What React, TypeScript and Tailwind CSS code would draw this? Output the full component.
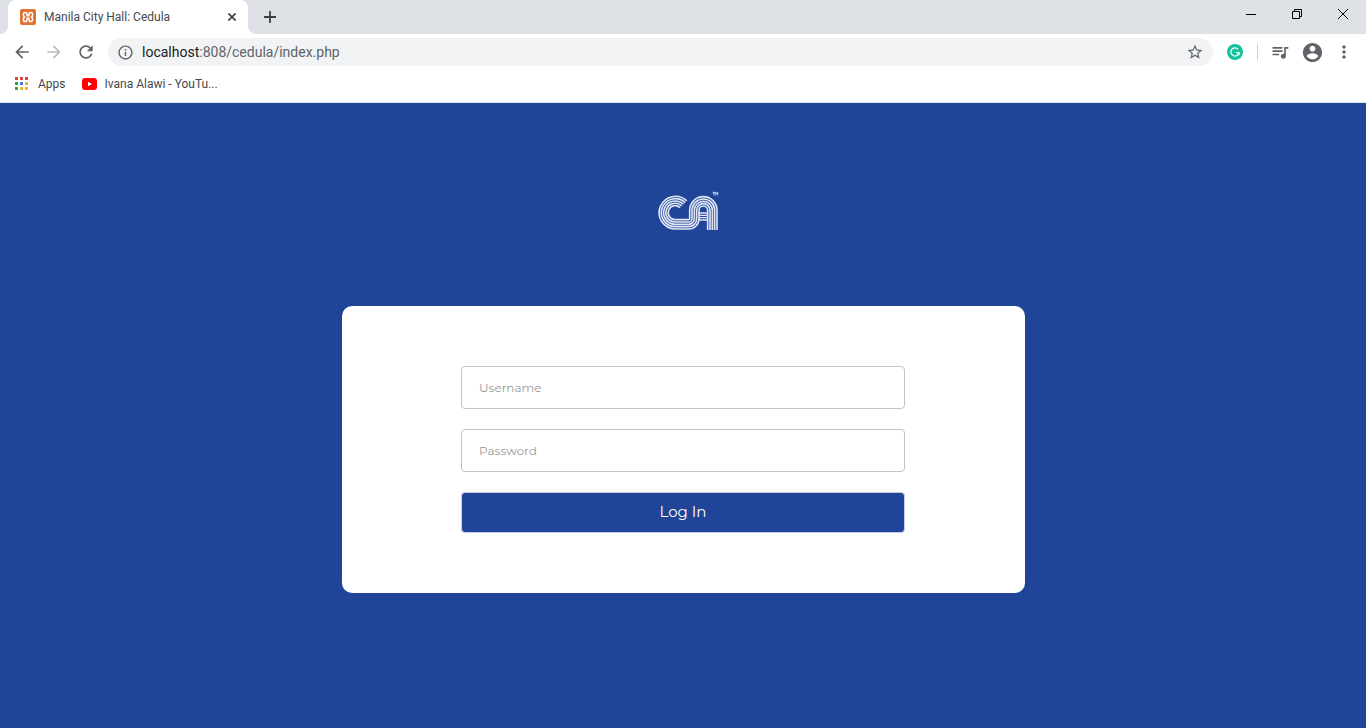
import React from "react";

const chromeFont = "font-['Segoe_UI',Roboto,sans-serif]";

function MaterialIcon({ path, className }: { path: string; className: string }) {
  return (
    <svg viewBox="0 0 24 24" fill="currentColor" className={className} aria-hidden="true">
      <path d={path} />
    </svg>
  );
}

const icons = {
  back: "M20 11H7.83l5.59-5.59L12 4l-8 8 8 8 1.41-1.41L7.83 13H20v-2z",
  forward: "M12 4l-1.41 1.41L16.17 11H4v2h12.17l-5.58 5.59L12 20l8-8z",
  reload:
    "M17.65 6.35C16.2 4.9 14.21 4 12 4c-4.42 0-7.99 3.58-7.99 8s3.57 8 7.99 8c3.73 0 6.84-2.55 7.73-6h-2.08c-.82 2.33-3.04 4-5.65 4-3.31 0-6-2.69-6-6s2.69-6 6-6c1.66 0 3.14.69 4.22 1.78L13 11h7V4l-2.35 2.35z",
  info: "M11 17h2v-6h-2v6zm1-15C6.48 2 2 6.48 2 12s4.48 10 10 10 10-4.48 10-10S17.52 2 12 2zm0 18c-4.41 0-8-3.59-8-8s3.59-8 8-8 8 3.59 8 8-3.59 8-8 8zM11 9h2V7h-2v2z",
  star: "M22 9.24l-7.19-.62L12 2 9.19 8.63 2 9.24l5.46 4.73L5.82 21 12 17.27 18.18 21l-1.63-7.03L22 9.24zM12 15.4l-3.76 2.27 1-4.28-3.32-2.88 4.38-.38L12 6.1l1.71 4.04 4.38.38-3.32 2.88 1 4.28L12 15.4z",
  queue:
    "M15 6H3v2h12V6zm0 4H3v2h12v-2zM3 16h8v-2H3v2zM17 6v8.18c-.31-.11-.65-.18-1-.18-1.66 0-3 1.34-3 3s1.34 3 3 3 3-1.34 3-3V8h3V6h-5z",
  account:
    "M12 2C6.48 2 2 6.48 2 12s4.48 10 10 10 10-4.48 10-10S17.52 2 12 2zm0 3c1.66 0 3 1.34 3 3s-1.34 3-3 3-3-1.34-3-3 1.34-3 3-3zm0 14.2c-2.5 0-4.71-1.28-6-3.22.03-1.99 4-3.08 6-3.08 1.99 0 5.97 1.09 6 3.08-1.29 1.94-3.5 3.22-6 3.22z",
  more: "M12 8c1.1 0 2-.9 2-2s-.9-2-2-2-2 .9-2 2 .9 2 2 2zm0 2c-1.1 0-2 .9-2 2s.9 2 2 2 2-.9 2-2-.9-2-2-2zm0 6c-1.1 0-2 .9-2 2s.9 2 2 2 2-.9 2-2-.9-2-2-2z",
};

function XamppIcon() {
  return (
    <svg viewBox="0 0 16 16" className="size-4 shrink-0" aria-hidden="true">
      <rect width="16" height="16" rx="2" fill="#df7230" />
      <path
        d="M4.6 8A2.3 2.3 0 0 1 3.4 6V5.2a1.8 1.8 0 0 1 3.6 0V6.8H9V5.2a1.8 1.8 0 0 1 3.6 0V6A2.3 2.3 0 0 1 11.4 8A2.3 2.3 0 0 1 12.6 10v.8a1.8 1.8 0 0 1-3.6 0V9.2H7v1.6a1.8 1.8 0 0 1-3.6 0V10A2.3 2.3 0 0 1 4.6 8z"
        fill="none"
        stroke="#fff"
        strokeWidth="1.5"
        strokeLinejoin="round"
      />
    </svg>
  );
}

function TabStrip() {
  return (
    <div className="flex h-[34px] items-stretch bg-[#dee1e6]">
      <div className="flex w-2 items-end bg-white">
        <span className="h-full w-2 rounded-br-lg bg-[#dee1e6]" />
      </div>
      <div className="flex w-60 items-center rounded-t-lg bg-white pr-2 pl-3">
        <XamppIcon />
        <span className="ml-2 flex-1 truncate text-xs text-[#45494d]">Manila City Hall: Cedula</span>
        <button type="button" aria-label="Close tab" className="flex size-4 items-center justify-center text-[#3c4043]">
          <svg viewBox="0 0 8 8" className="size-2" stroke="currentColor" strokeWidth="1.6" aria-hidden="true">
            <path d="M.4.4l7.2 7.2M7.6.4L.4 7.6" />
          </svg>
        </button>
      </div>
      <div className="flex w-2 bg-white">
        <span className="h-full w-2 rounded-bl-lg bg-[#dee1e6]" />
      </div>
      <button type="button" aria-label="New tab" className="flex w-7 items-center justify-center text-[#3c4043]">
        <svg viewBox="0 0 12 12" className="size-3" stroke="currentColor" strokeWidth="1.8" aria-hidden="true">
          <path d="M6 0v12M0 6h12" />
        </svg>
      </button>
      <div className="ml-auto flex h-7 text-black">
        <button type="button" aria-label="Minimize" className="flex w-[46px] items-center justify-center">
          <svg viewBox="0 0 10 10" className="size-[10px]" stroke="currentColor" aria-hidden="true">
            <path d="M0 5.5h10" />
          </svg>
        </button>
        <button type="button" aria-label="Restore" className="flex w-[46px] items-center justify-center">
          <svg viewBox="0 0 10 10" className="size-[10px]" fill="none" stroke="currentColor" aria-hidden="true">
            <path d="M.5 2.5h7v7h-7zM2.5 2.5v-2h7v7h-2" />
          </svg>
        </button>
        <button type="button" aria-label="Close" className="flex w-[46px] items-center justify-center">
          <svg viewBox="0 0 10 10" className="size-[10px]" stroke="currentColor" aria-hidden="true">
            <path d="M0 0l10 10M10 0L0 10" />
          </svg>
        </button>
      </div>
    </div>
  );
}

function Toolbar() {
  return (
    <div className="flex h-9 items-center pr-4 pl-3 text-[#5f6368]">
      <button type="button" aria-label="Back" className="mr-3 size-5">
        <MaterialIcon path={icons.back} className="size-5" />
      </button>
      <button type="button" aria-label="Forward" disabled className="mr-3 size-5 text-[#babcbe]">
        <MaterialIcon path={icons.forward} className="size-5" />
      </button>
      <button type="button" aria-label="Reload" className="mr-3 size-5">
        <MaterialIcon path={icons.reload} className="size-5" />
      </button>
      <div className="flex h-7 flex-1 items-center rounded-full bg-[#f1f3f4] px-[9px]">
        <button type="button" aria-label="View site information" className="mr-2">
          <MaterialIcon path={icons.info} className="size-[17px]" />
        </button>
        <div
          role="textbox"
          aria-label="Address"
          contentEditable
          suppressContentEditableWarning
          className="flex-1 text-sm whitespace-nowrap outline-none"
        >
          <span className="text-[#202124]">localhost</span>:808/cedula/index.php
        </div>
        <button type="button" aria-label="Bookmark this page">
          <MaterialIcon path={icons.star} className="size-[18px]" />
        </button>
      </div>
      <button type="button" aria-label="Grammarly" className="ml-[14px] size-4">
        <svg viewBox="0 0 16 16" className="size-4" aria-hidden="true">
          <circle cx="8" cy="8" r="8" fill="#15c39a" />
          <path d="M11 5.2A4.1 4.1 0 1 0 12 8.6H9M12 8.4v2.8" fill="none" stroke="#fff" strokeWidth="1.3" />
        </svg>
      </button>
      <span className="ml-[14px] h-4 w-px bg-[#cfd1d4]" />
      <button type="button" aria-label="Media controls" className="ml-3 size-5">
        <MaterialIcon path={icons.queue} className="size-5" />
      </button>
      <button type="button" aria-label="Profile" className="ml-[11px]">
        <MaterialIcon path={icons.account} className="size-[23px]" />
      </button>
      <button type="button" aria-label="Menu" className="ml-[10px] -mr-1 size-5">
        <MaterialIcon path={icons.more} className="size-5" />
      </button>
    </div>
  );
}

const appDots = [
  "#d9453b", "#d9453b", "#d9453b",
  "#34a04f", "#3f7ee0", "#f0b429",
  "#34a04f", "#f0b429", "#f0b429",
];

function BookmarksBar() {
  return (
    <nav aria-label="Bookmarks" className="flex h-[33px] items-center border-b border-[#dfe5ee] px-[15px] pb-[5px] text-xs text-[#45494d]">
      <a href="#apps" className="flex items-center">
        <svg viewBox="0 0 13 13" className="size-[13px]" aria-hidden="true">
          {appDots.map((fill, i) => (
            <rect key={i} x={(i % 3) * 5} y={Math.floor(i / 3) * 5} width="3" height="3" fill={fill} />
          ))}
        </svg>
        <span className="ml-[10px]">Apps</span>
      </a>
      <a href="#youtube" className="ml-4 flex items-center">
        <svg viewBox="0 0 15 12" className="h-3 w-[15px]" aria-hidden="true">
          <rect width="15" height="12" rx="3" fill="#f00" />
          <path d="M6 3.7v4.6L10 6z" fill="#fff" />
        </svg>
        <span className="ml-2">Ivana Alawi - YouTu...</span>
      </a>
    </nav>
  );
}

function Logo() {
  const stripes = [0, 1, 2, 3, 4].map((n) => {
    const r = 21 + n * 7;
    const bend = 3 + n * 7;
    const arch = 41 - n * 7;
    const d = r * 0.72;
    return (
      `M${90 + d} ${98 - d}A${r} ${r} 0 1 0 90 ${98 + r}H131` +
      `A${bend} ${bend} 0 0 0 ${131 + bend} 116V91` +
      `A${arch} ${arch} 0 0 1 ${175 + arch} 91V150`
    );
  });
  return (
    <svg viewBox="-27 0 282 180" className="h-[60px] w-[94px]" role="img" aria-label="CA">
      <g fill="none" stroke="#dfe6f5" strokeWidth="4.8">
        {stripes.map((d) => (
          <path key={d} d={d} />
        ))}
        <path d="M162 99h26M162 106h26M162 113h26M162 120h26" strokeWidth="4" />
      </g>
      <path d="M203 37h7M206.5 37v9M212 46v-9l3 4 3-4v9" fill="none" stroke="#e6ebf6" strokeWidth="2.6" />
    </svg>
  );
}

const field =
  "block h-[43px] w-full rounded border border-[#c4c4c4] bg-white px-[17px] text-xs text-[#444] outline-none placeholder:text-[#999]";

export default function App() {
  return (
    <div className="flex min-h-screen flex-col bg-[#204497]">
      <header className={`bg-white ${chromeFont}`}>
        <TabStrip />
        <Toolbar />
        <BookmarksBar />
      </header>
      <main className="flex flex-1 flex-col items-center pt-[77px] font-['Montserrat','Inter',sans-serif]">
        <Logo />
        <form
          onSubmit={(e: React.FormEvent) => e.preventDefault()}
          className="mt-[66px] flex w-1/2 flex-col items-center rounded-[10px] bg-white py-[60px]"
        >
          <div className="flex w-[65%] flex-col gap-5">
            <input type="text" aria-label="Username" placeholder="Username" className={field} />
            <input type="password" aria-label="Password" placeholder="Password" className={field} />
            <button
              type="submit"
              className="h-[41px] rounded border border-[#c3cde3] bg-[#204497] text-[15px] text-white"
            >
              Log In
            </button>
          </div>
        </form>
      </main>
    </div>
  );
}
